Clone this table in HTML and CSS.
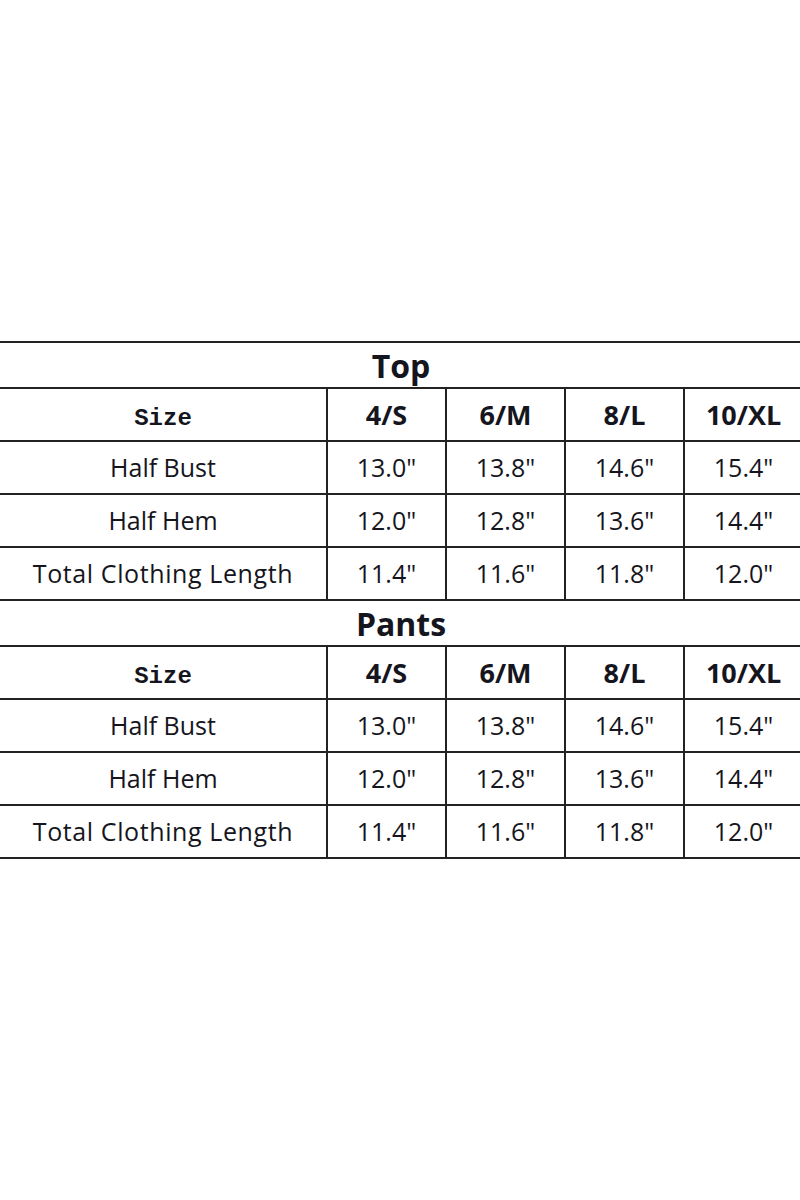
FILE: index.html
```html
<!DOCTYPE html>
<html>
<head>
<meta charset="utf-8">
<link rel="stylesheet" href="styles.css">
</head>
<body>
<div class="page">
<table class="chart">
<colgroup><col class="c0"><col class="c1"><col class="c1"><col class="c1"><col class="c1"></colgroup>
<tr class="title"><td colspan="5">Top</td></tr>
<tr class="head"><td class="size">Size</td><td>4/S</td><td>6/M</td><td>8/L</td><td>10/XL</td></tr>
<tr><td class="label">Half Bust</td><td>13.0"</td><td>13.8"</td><td>14.6"</td><td>15.4"</td></tr>
<tr><td class="label">Half Hem</td><td>12.0"</td><td>12.8"</td><td>13.6"</td><td>14.4"</td></tr>
<tr><td class="label wide">Total Clothing Length</td><td>11.4"</td><td>11.6"</td><td>11.8"</td><td>12.0"</td></tr>
<tr class="title"><td colspan="5">Pants</td></tr>
<tr class="head"><td class="size">Size</td><td>4/S</td><td>6/M</td><td>8/L</td><td>10/XL</td></tr>
<tr><td class="label">Half Bust</td><td>13.0"</td><td>13.8"</td><td>14.6"</td><td>15.4"</td></tr>
<tr><td class="label">Half Hem</td><td>12.0"</td><td>12.8"</td><td>13.6"</td><td>14.4"</td></tr>
<tr><td class="label wide">Total Clothing Length</td><td>11.4"</td><td>11.6"</td><td>11.8"</td><td>12.0"</td></tr>
</table>
</div>
</body>
</html>
```
FILE: styles.css
```css
html, body {
  margin: 0;
  padding: 0;
  background: #fff;
}
.page {
  width: 800px;
  height: 1200px;
  overflow: hidden;
  padding-top: 341px;
  box-sizing: border-box;
}
.chart {
  border-collapse: collapse;
  table-layout: fixed;
  width: 806px;
  margin-left: -2px;
  font-family: "Open Sans", "Noto Sans", sans-serif;
  color: #151520;
}
.c0 { width: 328px; }
.c1 { width: 119px; }
.chart td {
  border: 2px solid #222;
  text-align: center;
  vertical-align: middle;
  padding: 0;
  height: 51px;
  line-height: 1;
  font-size: 25px;
  white-space: nowrap;
}
.chart td.wide {
  letter-spacing: 0.6px;
}
.chart tr.title td {
  font-size: 32px;
  font-weight: 700;
  padding-top: 2px;
  height: 42px;
}
.chart tr.head td {
  font-size: 27px;
  font-weight: 700;
}
.chart tr.head td.size {
  font-family: "Liberation Mono", "DejaVu Sans Mono", monospace;
  font-size: 24px;
  font-weight: 700;
  padding-top: 8px;
  height: 43px;
}
```
